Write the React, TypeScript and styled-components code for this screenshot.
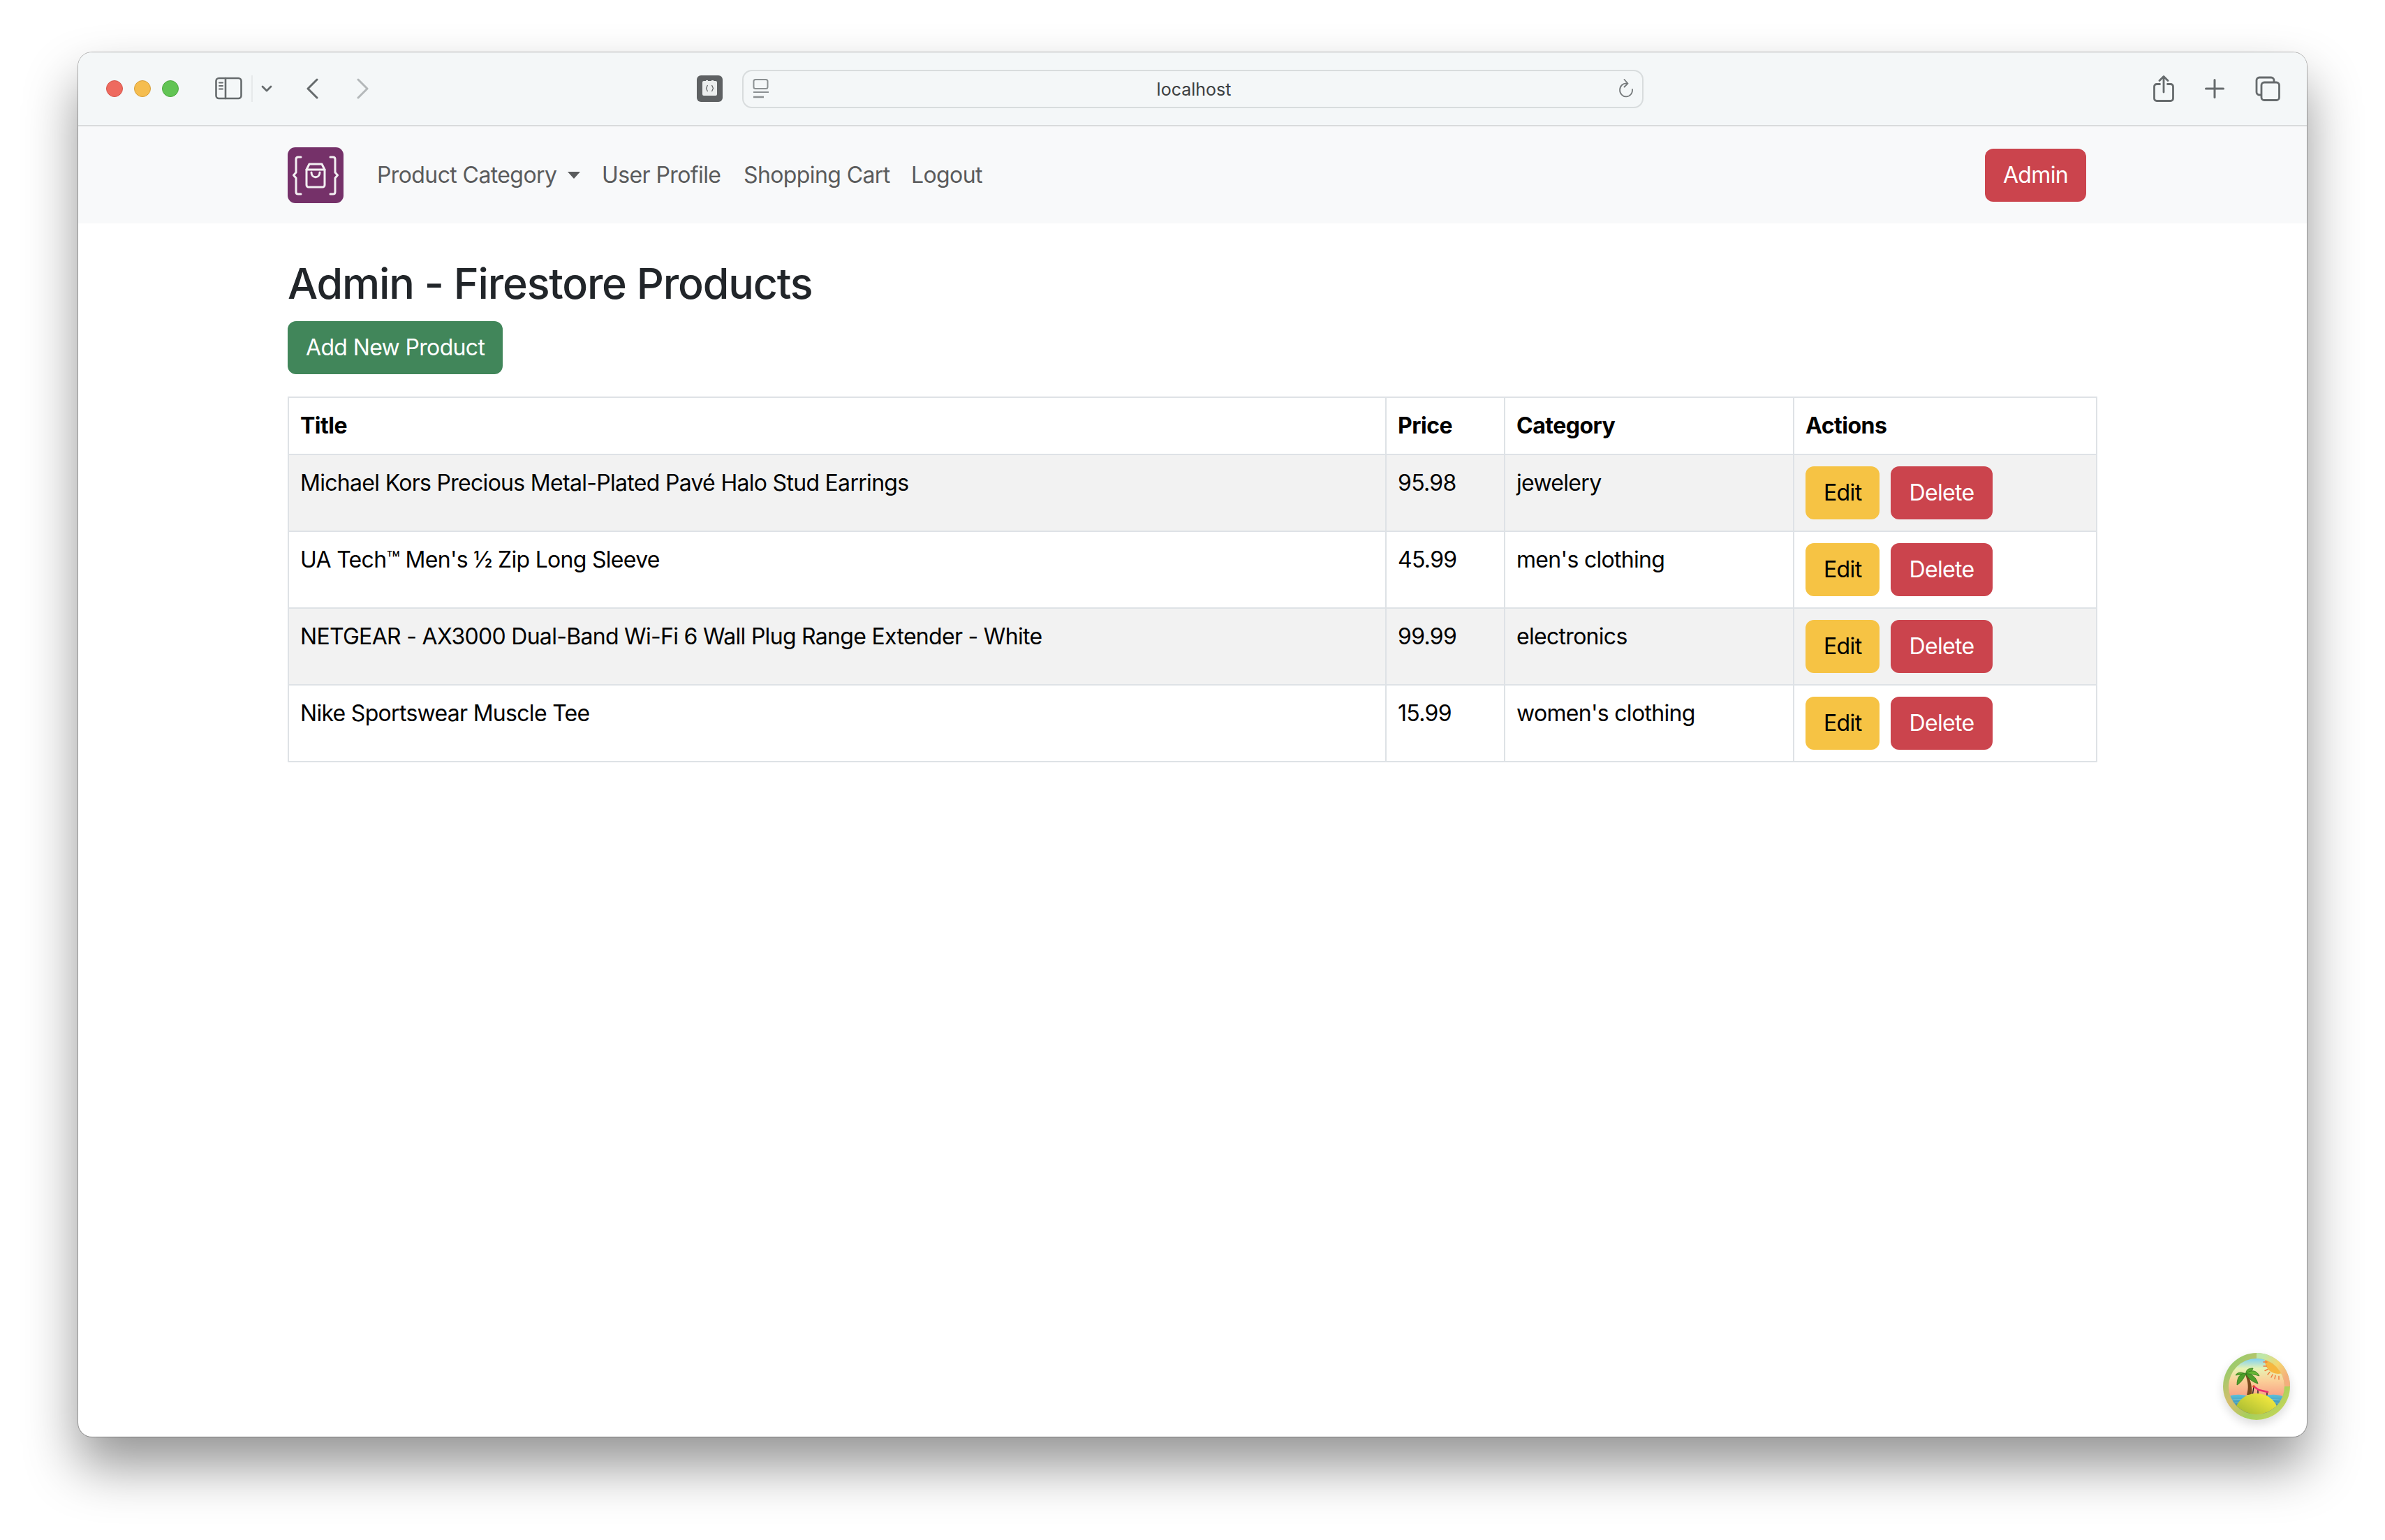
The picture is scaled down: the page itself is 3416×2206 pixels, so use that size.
import styled, { createGlobalStyle } from "styled-components";

const INK = "#212529";
const LINE = "#dee2e6";
const ICON = "#666b6d";
const RED = "#cb444d";
const GREEN = "#41865a";
const YELLOW = "#f6c344";

const products = [
  { title: "Michael Kors Precious Metal-Plated Pavé Halo Stud Earrings", price: "95.98", category: "jewelery" },
  { title: "UA Tech™ Men's ½ Zip Long Sleeve", price: "45.99", category: "men's clothing" },
  { title: "NETGEAR - AX3000 Dual-Band Wi-Fi 6 Wall Plug Range Extender - White", price: "99.99", category: "electronics" },
  { title: "Nike Sportswear Muscle Tee", price: "15.99", category: "women's clothing" },
];

function SidebarIcon() {
  return (
    <svg width="82" height="38" viewBox="0 0 82 38" fill="none" stroke={ICON} strokeWidth="2.6" strokeLinecap="round" strokeLinejoin="round">
      <rect x="1.5" y="4" width="36" height="29" rx="4" />
      <path d="M15 4v29" />
      <path d="M6 10.500h5M6 15h5M6 19.500h5" strokeWidth="2" />
      <path d="M53 0v38" stroke="#e2e5e6" strokeWidth="1.500" />
      <path d="M68 16l6 6 6-6" strokeWidth="2.800" />
    </svg>
  );
}

function BackIcon({ faded }: { faded?: boolean }) {
  return (
    <svg width="18" height="30" viewBox="0 0 18 30" fill="none" stroke={faded ? "#b4b8ba" : ICON} strokeWidth="3" strokeLinecap="round" strokeLinejoin="round">
      <path d={faded ? "M2 2l13 13L2 28" : "M16 2L3 15l13 13"} />
    </svg>
  );
}

function ExtensionIcon() {
  return (
    <svg width="37" height="38" viewBox="0 0 37 38">
      <rect width="37" height="38" rx="6" fill="#5e6163" />
      <path d="M8 10a2 2 0 0 1 2-2h3v-1h3v1h5v-1h3v1h3a2 2 0 0 1 2 2v17a2 2 0 0 1-2 2H10a2 2 0 0 1-2-2z" fill="#eceeee" />
      <path d="M15.500 14l-2 4.500 2 4.500M21.500 14l2 4.500-2 4.500" fill="none" stroke="#5e6163" strokeWidth="1.200" />
    </svg>
  );
}

function ReaderIcon() {
  return (
    <svg width="24" height="28" viewBox="0 0 24 28" fill="none" stroke="#8b9092" strokeWidth="2">
      <rect x="1.500" y="1" width="20" height="13" rx="2.500" />
      <path d="M1 19h22" />
      <path d="M1 26h15" strokeWidth="2.500" />
    </svg>
  );
}

function ReloadIcon() {
  return (
    <svg width="22" height="28" viewBox="0 0 22 28" fill="none" stroke="#75797b" strokeWidth="1.800" strokeLinecap="round" strokeLinejoin="round">
      <path d="M12 6.500A9 9.500 0 1 0 20 15" />
      <path d="M8.500 1l5 5.500-5 5" />
    </svg>
  );
}

function ShareIcon() {
  return (
    <svg width="30" height="38" viewBox="0 0 30 38" fill="none" stroke={ICON} strokeWidth="2.800" strokeLinecap="round" strokeLinejoin="round">
      <path d="M9.500 12.500H5a3.500 3.500 0 0 0-3.500 3.500v17A3.500 3.500 0 0 0 5 36.500h20a3.500 3.500 0 0 0 3.500-3.500V16a3.500 3.500 0 0 0-3.500-3.500h-4.500" />
      <path d="M15 24V2M9 7.500L15 1.500l6 6" />
    </svg>
  );
}

function PlusIcon() {
  return (
    <svg width="28" height="28" viewBox="0 0 28 28" stroke={ICON} strokeWidth="3" strokeLinecap="round">
      <path d="M14 1.500v25M1.500 14h25" />
    </svg>
  );
}

function TabsIcon() {
  return (
    <svg width="36" height="36" viewBox="0 0 36 36" fill="none" stroke={ICON} strokeWidth="2.800" strokeLinejoin="round">
      <path d="M8 27H6a4 4 0 0 1-4-4V6a4 4 0 0 1 4-4h17a4 4 0 0 1 4 4v2" />
      <rect x="9" y="9" width="25.500" height="25.500" rx="4" />
    </svg>
  );
}

function ShopLogo() {
  return (
    <svg width="80" height="80" viewBox="0 0 80 80" fill="none" stroke="#f3eff2" strokeWidth="3" strokeLinecap="round" strokeLinejoin="round">
      <rect width="80" height="80" rx="11" fill="#753169" stroke="none" />
      <path d="M19 14h-4c-2 0-3 1-3 3v19l-3.500 4 3.500 4v20c0 2 1 3 3 3h4" />
      <path d="M61 14h4c2 0 3 1 3 3v19l3.500 4-3.500 4v20c0 2-1 3-3 3h-4" />
      <path d="M31 24h18l4 8v22a3 3 0 0 1-3 3H30a3 3 0 0 1-3-3V32z" />
      <path d="M27 32h26" />
      <path d="M34 36c0 9 12 9 12 0" />
    </svg>
  );
}

function IslandBadge() {
  return (
    <svg width="96" height="96" viewBox="0 0 96 96">
      <defs>
        <linearGradient id="ring" x1="0.100" y1="0.100" x2="0.900" y2="0.900">
          <stop offset="0" stopColor="#8fce6a" />
          <stop offset="0.400" stopColor="#d7bd6d" />
          <stop offset="0.700" stopColor="#a4cf5b" />
          <stop offset="1" stopColor="#c6d65a" />
        </linearGradient>
        <linearGradient id="ringGlow" x1="0.300" y1="0" x2="1" y2="0.600">
          <stop offset="0" stopColor="#bfe7a8" />
          <stop offset="0.500" stopColor="#f5d76e" />
          <stop offset="1" stopColor="#f4ae7d" />
        </linearGradient>
        <linearGradient id="sky" x1="0" y1="0" x2="0" y2="1">
          <stop offset="0" stopColor="#7fd0f2" />
          <stop offset="0.180" stopColor="#e6f3b4" />
          <stop offset="0.400" stopColor="#fbcf98" />
          <stop offset="0.720" stopColor="#f79a82" />
        </linearGradient>
        <linearGradient id="hill" x1="0.100" y1="1" x2="0.700" y2="0">
          <stop offset="0" stopColor="#6f9a28" />
          <stop offset="1" stopColor="#f4e93f" />
        </linearGradient>
        <linearGradient id="sea" x1="0" y1="0" x2="0" y2="1">
          <stop offset="0" stopColor="#5cc0dc" />
          <stop offset="1" stopColor="#23647f" />
        </linearGradient>
        <clipPath id="inner">
          <circle cx="48" cy="48" r="40" />
        </clipPath>
      </defs>
      <circle cx="48" cy="48" r="48" fill="url(#ring)" />
      <path d="M48 0a48 48 0 0 1 48 48h-8A40 40 0 0 0 48 8z" fill="url(#ringGlow)" />
      <g clipPath="url(#inner)">
        <rect x="8" y="8" width="80" height="80" fill="url(#sky)" />
        <circle cx="79" cy="11" r="19" fill="#f6b73f" />
        <path d="M58 13h5M58 19h4.500M60 25.500l4-2M64 31l3-3.500M69 35l2-4M74 37l1-4.500M80 38v-4.500" stroke="#f0783c" strokeWidth="1.400" strokeLinecap="round" />
        <path d="M34 60C37 50 36 42 32 31l3-1c5 10 7 20 6 30z" fill="#7a4a1e" />
        <path d="M33 31c-6-5-13-3-15 1 5-1 9-1 15-1z" fill="#5aa92e" stroke="#2f7a1c" strokeWidth="0.800" />
        <path d="M33 29c-8 0-13 5-13 17 5-3 10-9 13-17z" fill="#4f9e2a" stroke="#2f7a1c" strokeWidth="0.800" />
        <path d="M33 29c0-6 5-7 10-7-1 4-5 6-10 7z" fill="#5aa92e" stroke="#2f7a1c" strokeWidth="0.800" />
        <path d="M33 30c6-6 15-6 19 3-6-2-12-3-19-3z" fill="#66b634" stroke="#2f7a1c" strokeWidth="0.800" />
        <path d="M33 30c7 0 14 3 17 14-7-2-14-7-17-14z" fill="#4f9e2a" stroke="#2f7a1c" strokeWidth="0.800" />
        <path d="M44 48l-1.500 11M50 53v6M63 56v6" stroke="#1b1b1b" strokeWidth="1.400" />
        <path d="M44 48l7 5 13 3" fill="none" stroke="#e8316f" strokeWidth="2.600" strokeLinecap="round" strokeLinejoin="round" />
        <circle cx="44" cy="48" r="1.800" fill="#e8412d" />
        <path d="M8 62c10-3 20-3 30 1v26H8zM58 62c10-3 20-3 30 1v26H58z" fill="url(#sea)" />
        <path d="M8 68c10-2 20-2 30 1M58 68c10-2 20-2 30 1M8 73c10-2 20-2 30 1M58 73c10-2 20-2 30 1" fill="none" stroke="#8fd4e6" strokeWidth="0.800" opacity="0.700" />
        <ellipse cx="48" cy="89" rx="32" ry="31" fill="url(#hill)" />
      </g>
    </svg>
  );
}

export default function App() {
  return (
    <>
      <GlobalStyle />
      <Stage>
        <BrowserWindow>
          <Toolbar>
            <Lights>
              <Light $color="#ee6a5f" $edge="#d5564c" />
              <Light $color="#f5bd4f" $edge="#d79f3a" />
              <Light $color="#61c454" $edge="#4fa942" />
            </Lights>
            <ToolSlot $left={52}>
              <SidebarIcon />
            </ToolSlot>
            <ToolSlot $left={48}>
              <BackIcon />
            </ToolSlot>
            <ToolSlot $left={55}>
              <BackIcon faded />
            </ToolSlot>
            <ToolSlot $left={469}>
              <ExtensionIcon />
            </ToolSlot>
            <AddressBar>
              <ReaderIcon />
              <AddressText>localhost</AddressText>
              <ReloadIcon />
            </AddressBar>
            <ToolSlot $left={730}>
              <ShareIcon />
            </ToolSlot>
            <ToolSlot $left={44}>
              <PlusIcon />
            </ToolSlot>
            <ToolSlot $left={44}>
              <TabsIcon />
            </ToolSlot>
          </Toolbar>

          <Navbar>
            <ShopLogo />
            <NavLinks>
              <NavLink $width={322}>
                Product Category
                <Caret />
              </NavLink>
              <NavLink $width={203}>User Profile</NavLink>
              <NavLink $width={240}>Shopping Cart</NavLink>
              <NavLink>Logout</NavLink>
            </NavLinks>
            <Button $bg={RED}>Admin</Button>
          </Navbar>

          <Main>
            <Heading>Admin - Firestore Products</Heading>
            <Button $bg={GREEN}>Add New Product</Button>
            <ProductTable>
              <colgroup>
                <col width={1572} />
                <col width={170} />
                <col width={414} />
                <col width={434} />
              </colgroup>
              <thead>
                <tr>
                  <HeadCell>Title</HeadCell>
                  <HeadCell>Price</HeadCell>
                  <HeadCell>Category</HeadCell>
                  <HeadCell>Actions</HeadCell>
                </tr>
              </thead>
              <tbody>
                {products.map((p) => (
                  <ProductRow key={p.title}>
                    <Cell>{p.title}</Cell>
                    <Cell>{p.price}</Cell>
                    <Cell>{p.category}</Cell>
                    <Cell>
                      <Actions>
                        <Button $bg={YELLOW} $fg="#000">Edit</Button>
                        <Button $bg={RED}>Delete</Button>
                      </Actions>
                    </Cell>
                  </ProductRow>
                ))}
              </tbody>
            </ProductTable>
          </Main>

          <Badge>
            <IslandBadge />
          </Badge>
        </BrowserWindow>
      </Stage>
    </>
  );
}

const GlobalStyle = createGlobalStyle`
  html, body {
    margin: 0;
    background: #fff;
  }
  body {
    font-family: Inter, "Liberation Sans", sans-serif;
    font-size: 32px;
    line-height: 48px;
    color: ${INK};
  }
`;

const Stage = styled.div`
  box-sizing: border-box;
  width: 3416px;
  height: 2206px;
  padding: 75px 112px 148px;
  overflow: hidden;
`;

const BrowserWindow = styled.div`
  position: relative;
  height: 100%;
  background: #fff;
  border-radius: 20px;
  overflow: hidden;
  box-shadow: 0 0 0 1px rgba(0, 0, 0, 0.28), 0 42px 76px rgba(0, 0, 0, 0.42);
`;

const Toolbar = styled.div`
  box-sizing: border-box;
  display: flex;
  align-items: center;
  height: 106px;
  padding: 0 0 0 40px;
  background: #f4f7f8;
  border-bottom: 2px solid #d9dbdc;
`;

const Lights = styled.div`
  display: flex;
  gap: 16px;
`;

const Light = styled.span<{ $color: string; $edge: string }>`
  box-sizing: border-box;
  width: 24px;
  height: 24px;
  border-radius: 50%;
  background: ${(p) => p.$color};
  border: 1px solid ${(p) => p.$edge};
`;

const ToolSlot = styled.div<{ $left: number }>`
  display: flex;
  margin-left: ${(p) => p.$left}px;
`;

const AddressBar = styled.div`
  box-sizing: border-box;
  display: flex;
  align-items: center;
  gap: 12px;
  width: 1291px;
  height: 55px;
  margin-left: 28px;
  padding: 0 12px 0 13px;
  border: 2px solid #d8dcdd;
  border-radius: 14px;
`;

const AddressText = styled.span`
  flex: 1;
  padding-top: 2px;
  text-align: center;
  font-size: 25px;
  line-height: 32px;
  color: #3c3f41;
`;

const Navbar = styled.nav`
  box-sizing: border-box;
  display: flex;
  align-items: center;
  height: 139px;
  padding: 0 316px 0 300px;
  background: #f8f9fa;
`;

const NavLinks = styled.div`
  display: flex;
  flex: 1;
  align-items: center;
  margin-left: 48px;
`;

const NavLink = styled.a<{ $width?: number }>`
  display: flex;
  align-items: center;
  width: ${(p) => (p.$width ? `${p.$width}px` : "auto")};
  color: #5a5b5c;
  white-space: nowrap;
  letter-spacing: -0.6px;
`;

const Caret = styled.span`
  margin-left: 16px;
  border-top: 10px solid #5a5b5c;
  border-left: 9px solid transparent;
  border-right: 9px solid transparent;
`;

const Button = styled.button<{ $bg: string; $fg?: string }>`
  box-sizing: border-box;
  height: 76px;
  padding: 0 26px;
  font: inherit;
  letter-spacing: -0.65px;
  color: ${(p) => p.$fg ?? "#fff"};
  background: ${(p) => p.$bg};
  border: none;
  border-radius: 12px;
`;

const Main = styled.main`
  display: flex;
  flex-direction: column;
  align-items: flex-start;
  padding: 48px 300px 0;
`;

const Heading = styled.h1`
  margin: 0 0 15px;
  font-size: 61px;
  line-height: 77px;
  font-weight: 500;
  letter-spacing: -1.2px;
`;

const ProductTable = styled.table`
  width: 2592px;
  margin-top: 32px;
  table-layout: fixed;
  border-collapse: separate;
  border-spacing: 0;
  border-top: 2px solid ${LINE};
  border-left: 2px solid ${LINE};
  color: #000;
`;

const HeadCell = styled.th`
  padding: 16px;
  text-align: left;
  font-weight: 700;
  border-right: 2px solid ${LINE};
  border-bottom: 2px solid ${LINE};
  letter-spacing: -0.5px;
`;

const ProductRow = styled.tr`
  &:nth-child(odd) {
    background: #f2f2f2;
  }
`;

const Cell = styled.td`
  padding: 16px;
  vertical-align: top;
  border-right: 2px solid ${LINE};
  border-bottom: 2px solid ${LINE};
  letter-spacing: -0.7px;
`;

const Actions = styled.div`
  display: flex;
  gap: 16px;
`;

const Badge = styled.div`
  position: absolute;
  right: 24px;
  bottom: 24px;
  display: flex;
  border-radius: 50%;
  box-shadow: 0 6px 14px rgba(0, 0, 0, 0.14);
`;
